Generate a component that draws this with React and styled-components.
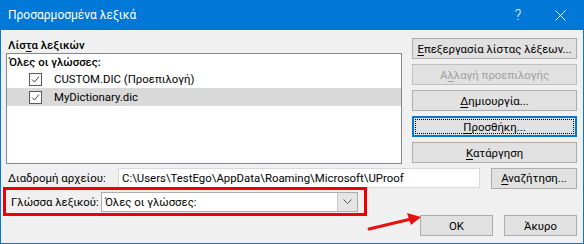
import styled, { createGlobalStyle } from 'styled-components'

const GlobalStyle = createGlobalStyle`
  html, body {
    margin: 0;
    padding: 0;
    background: #ffffff;
  }
  body {
    font-family: "Segoe UI", Roboto, "Noto Sans", sans-serif;
    font-size: 11.4px;
    color: #000;
  }
`

const Window = styled.div`
  position: relative;
  width: 584px;
  height: 244px;
  box-sizing: border-box;
  background: #f0f0f0;
  border: 1px solid #0078d7;
  border-top: none;
  display: flex;
  flex-direction: column;
  overflow: hidden;
`

const TitleBar = styled.div`
  height: 30px;
  flex: none;
  background: #0078d7;
  color: #fff;
  display: flex;
  align-items: center;
  padding-left: 7px;
`

const Title = styled.div`
  flex: 1;
  font-size: 12px;
`

const TitleButton = styled.div`
  width: ${p => p.w || '46px'};
  height: 30px;
  display: flex;
  align-items: center;
  justify-content: center;
  font-size: 14px;
  font-weight: 300;
`

const Body = styled.div`
  flex: 1;
  padding: 8px 6px 0 5px;
  display: flex;
  flex-direction: column;
`

const TopSection = styled.div`
  display: flex;
  align-items: flex-start;
`

const ListColumn = styled.div`
  width: 396px;
  display: flex;
  flex-direction: column;
`

const GroupLabel = styled.div`
  height: 15px;
  line-height: 14px;
  font-weight: 500;
  padding-left: 2px;
`

const ListBox = styled.div`
  height: 111px;
  box-sizing: border-box;
  border: 1px solid #828790;
  background: #fff;
`

const ListHeader = styled.div`
  height: 16px;
  line-height: 17px;
  font-weight: 500;
  padding-left: 2px;
`

const ListRow = styled.div`
  height: 18px;
  display: flex;
  align-items: center;
  padding-left: 22px;
  white-space: nowrap;
  background: ${p => (p.selected ? '#d9d9d9' : 'transparent')};
`

const Check = styled.span`
  width: 11px;
  height: 11px;
  border: 1px solid #5a5a5a;
  background: #fff;
  display: inline-flex;
  align-items: center;
  justify-content: center;
  margin-right: 12px;
`

const ButtonColumn = styled.div`
  margin-left: 10px;
  width: 165px;
  display: flex;
  flex-direction: column;
  gap: 5px;
`

const Button = styled.div`
  height: 21px;
  box-sizing: border-box;
  width: ${p => p.w || '100%'};
  border: ${p => (p.focused ? '2px solid #0078d7' : '1px solid #adadad')};
  background: #e1e1e1;
  border-color: ${p => (p.disabled ? '#bfbfbf' : p.focused ? '#0078d7' : '#adadad')};
  color: ${p => (p.disabled ? '#a0a0a0' : '#000')};
  display: flex;
  align-items: center;
  justify-content: center;
  white-space: nowrap;
  position: relative;
  flex: none;
  &::after {
    content: '';
    display: ${p => (p.focused ? 'block' : 'none')};
    position: absolute;
    inset: 1px;
    border: 1px dotted #000;
  }
`

const U = styled.span`
  text-decoration: underline;
  text-underline-offset: 2px;
`

const PathRow = styled.div`
  display: flex;
  align-items: center;
  margin-top: 4px;
  height: 20px;
`

const FieldLabel = styled.div`
  width: ${p => p.w};
  padding-left: 2px;
  box-sizing: border-box;
  flex: none;
  white-space: nowrap;
`

const TextBox = styled.div`
  width: 364px;
  height: 20px;
  box-sizing: border-box;
  border: 1px solid #d9d9d9;
  background: #fff;
  padding-left: 3px;
  line-height: 18px;
  white-space: nowrap;
  overflow: hidden;
`

const BottomRow = styled.div`
  display: flex;
  align-items: flex-start;
  margin-top: -1px;
`

const Highlight = styled.div`
  margin-left: -3px;
  width: 365px;
  height: 29px;
  box-sizing: border-box;
  border: 3px solid #ee0000;
  display: flex;
  align-items: center;
  padding-left: 3px;
`

const Combo = styled.div`
  width: 257px;
  height: 20px;
  box-sizing: border-box;
  border: 1px solid #adadad;
  background: #fff;
  display: flex;
  align-items: stretch;
`

const ComboText = styled.div`
  flex: 1;
  padding-left: 3px;
  line-height: 18px;
`

const ComboArrow = styled.div`
  width: 19px;
  background: #e5e5e5;
  border-left: 1px solid #c4c4c4;
  display: flex;
  align-items: center;
  justify-content: center;
`

const DialogButtons = styled.div`
  margin-left: 53px;
  margin-top: 28px;
  display: flex;
  gap: 11px;
`

const Arrow = styled.svg`
  position: absolute;
  left: 360px;
  top: 210px;
`

const CheckMark = () => (
  <svg width="9" height="9" viewBox="0 0 9 9">
    <path d="M1 4.5 L3.5 7 L8 1.5" stroke="#444" strokeWidth="1" fill="none" />
  </svg>
)

export default function App() {
  return (
    <>
      <GlobalStyle />
      <Window>
        <TitleBar>
          <Title>Προσαρμοσμένα λεξικά</Title>
          <TitleButton w="38px">?</TitleButton>
          <TitleButton>
            <svg width="11" height="11" viewBox="0 0 11 11">
              <path d="M0.5 0.5 L10.5 10.5 M10.5 0.5 L0.5 10.5" stroke="#fff" strokeWidth="1" />
            </svg>
          </TitleButton>
        </TitleBar>
        <Body>
          <TopSection>
            <ListColumn>
              <GroupLabel>Λίσ<U>τ</U>α λεξικών</GroupLabel>
              <ListBox>
                <ListHeader>Όλες οι γλώσσες:</ListHeader>
                <ListRow>
                  <Check><CheckMark /></Check>
                  CUSTOM.DIC (Προεπιλογή)
                </ListRow>
                <ListRow selected>
                  <Check><CheckMark /></Check>
                  MyDictionary.dic
                </ListRow>
              </ListBox>
            </ListColumn>
            <ButtonColumn>
              <Button><span><U>Ε</U>πεξεργασία λίστας λέξεων...</span></Button>
              <Button disabled><span>Α<U>λ</U>λαγή προεπιλογής</span></Button>
              <Button><span><U>Δ</U>ημιουργία...</span></Button>
              <Button focused><span><U>Π</U>ροσθήκη...</span></Button>
              <Button><span><U>Κ</U>ατάργηση</span></Button>
            </ButtonColumn>
          </TopSection>
          <PathRow>
            <FieldLabel w="112px">Διαδρομή αρχείου:</FieldLabel>
            <TextBox>C:\Users\TestEgo\AppData\Roaming\Microsoft\UProof</TextBox>
            <Button w="86px" style={{ marginLeft: 11 }}><span><U>Α</U>ναζήτηση...</span></Button>
          </PathRow>
          <BottomRow>
            <Highlight>
              <FieldLabel w="92px">Γλώσσα λεξικού:</FieldLabel>
              <Combo>
                <ComboText>Όλες οι γλώσσες:</ComboText>
                <ComboArrow>
                  <svg width="9" height="5" viewBox="0 0 9 5">
                    <path d="M0.5 0.5 L4.5 4.5 L8.5 0.5" stroke="#555" strokeWidth="1" fill="none" />
                  </svg>
                </ComboArrow>
              </Combo>
            </Highlight>
            <DialogButtons>
              <Button w="73px">OK</Button>
              <Button w="73px">Άκυρο</Button>
            </DialogButtons>
          </BottomRow>
        </Body>
        <Arrow width="70" height="30" viewBox="0 0 70 30">
          <path d="M8 19 L50 9" stroke="#e81010" strokeWidth="3" strokeLinecap="round" />
          <path d="M60 7 L46 3 L50 15 Z" fill="#e81010" />
        </Arrow>
      </Window>
    </>
  )
}
